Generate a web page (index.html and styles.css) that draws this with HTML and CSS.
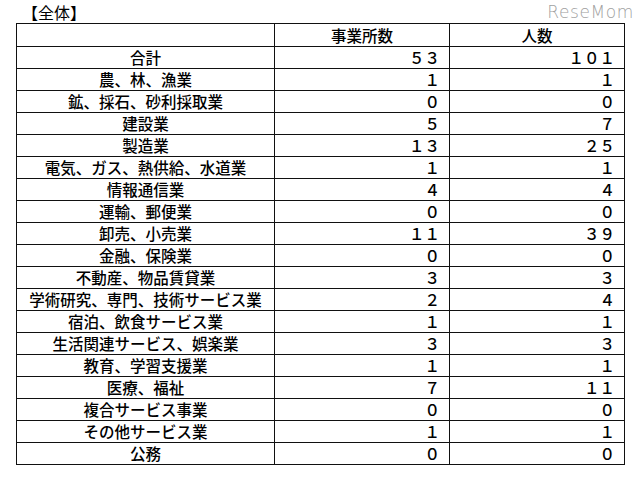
FILE: index.html
```html
<!DOCTYPE html>
<html lang="ja">
<head>
<meta charset="utf-8">
<title>全体</title>
<link rel="stylesheet" href="styles.css">
</head>
<body>
<div class="page">
  <div class="top">
    <div class="title">【全体】</div>
    <div class="logo">ReseMom</div>
  </div>
  <table class="stats">
    <colgroup><col class="c-name"><col class="c-num"><col class="c-num"></colgroup>
    <thead>
      <tr><th></th><th>事業所数</th><th>人数</th></tr>
    </thead>
    <tbody>
      <tr><td class="name">合計</td><td class="num">５３</td><td class="num">１０１</td></tr>
      <tr><td class="name">農、林、漁業</td><td class="num">１</td><td class="num">１</td></tr>
      <tr><td class="name">鉱、採石、砂利採取業</td><td class="num">０</td><td class="num">０</td></tr>
      <tr><td class="name">建設業</td><td class="num">５</td><td class="num">７</td></tr>
      <tr><td class="name">製造業</td><td class="num">１３</td><td class="num">２５</td></tr>
      <tr><td class="name">電気、ガス、熱供給、水道業</td><td class="num">１</td><td class="num">１</td></tr>
      <tr><td class="name">情報通信業</td><td class="num">４</td><td class="num">４</td></tr>
      <tr><td class="name">運輸、郵便業</td><td class="num">０</td><td class="num">０</td></tr>
      <tr><td class="name">卸売、小売業</td><td class="num">１１</td><td class="num">３９</td></tr>
      <tr><td class="name">金融、保険業</td><td class="num">０</td><td class="num">０</td></tr>
      <tr><td class="name">不動産、物品賃貸業</td><td class="num">３</td><td class="num">３</td></tr>
      <tr><td class="name">学術研究、専門、技術サービス業</td><td class="num">２</td><td class="num">４</td></tr>
      <tr><td class="name">宿泊、飲食サービス業</td><td class="num">１</td><td class="num">１</td></tr>
      <tr><td class="name">生活関連サービス、娯楽業</td><td class="num">３</td><td class="num">３</td></tr>
      <tr><td class="name">教育、学習支援業</td><td class="num">１</td><td class="num">１</td></tr>
      <tr><td class="name">医療、福祉</td><td class="num">７</td><td class="num">１１</td></tr>
      <tr><td class="name">複合サービス事業</td><td class="num">０</td><td class="num">０</td></tr>
      <tr><td class="name">その他サービス業</td><td class="num">１</td><td class="num">１</td></tr>
      <tr><td class="name">公務</td><td class="num">０</td><td class="num">０</td></tr>
    </tbody>
  </table>
</div>
</body>
</html>
```

FILE: styles.css
```css
html, body {
  margin: 0;
  padding: 0;
  background: #fff;
}
body {
  font-family: "Noto Sans CJK JP", "Noto Sans", sans-serif;
  color: #000;
  font-size: 15.5px;
}
.page {
  width: 640px;
  height: 481px;
  padding: 0 0 0 16px;
  box-sizing: border-box;
}
.top {
  display: flex;
  justify-content: space-between;
  align-items: flex-end;
  height: 23px;
}
.title {
  padding-left: 6px;
  line-height: 20px;
  font-size: 16px;
  padding-bottom: 1px;
}
.logo {
  font-family: "DejaVu Sans", sans-serif;
  font-size: 17px;
  font-weight: 200;
  color: #a0a0a0;
  letter-spacing: 0.6px;
  align-self: flex-start;
  margin-top: 2px;
  margin-right: 6px;
}
.stats {
  border-collapse: collapse;
  width: 608px;
  table-layout: fixed;
}
.c-name { width: 258px; }
.c-num { width: 175px; }
.stats th,
.stats td {
  border: 1px solid #111;
  padding: 0;
  height: 21px;
  font-weight: 500;
  line-height: 21px;
  white-space: nowrap;
}
.stats th {
  height: 22px;
  text-align: center;
}
.stats td.name {
  text-align: center;
}
.stats td.num {
  text-align: right;
  padding-right: 9px;
}
```
